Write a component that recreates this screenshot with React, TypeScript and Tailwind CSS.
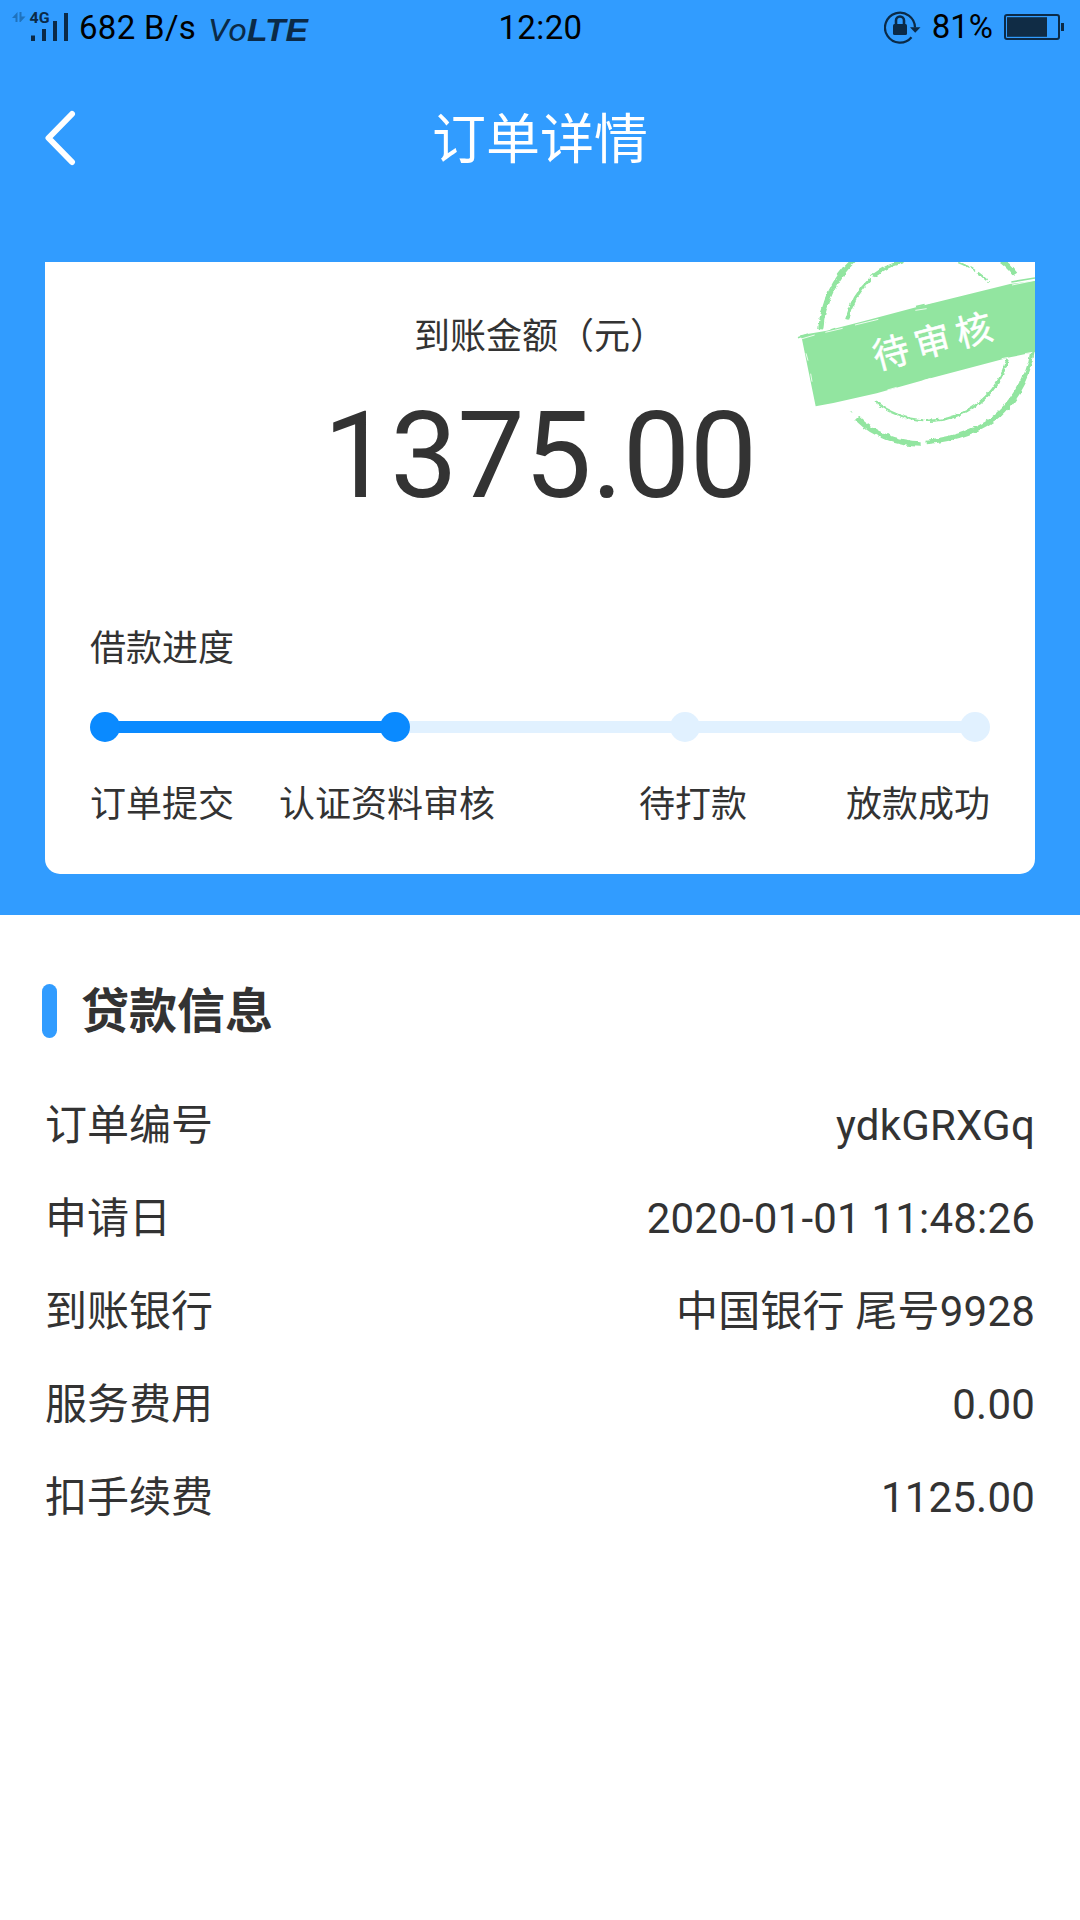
const steps = [
  { label: "订单提交", done: true },
  { label: "认证资料审核", done: true },
  { label: "待打款", done: false },
  { label: "放款成功", done: false },
];

const details = [
  { label: "订单编号", value: "ydkGRXGq" },
  { label: "申请日", value: "2020-01-01 11:48:26" },
  { label: "到账银行", value: "中国银行 尾号9928" },
  { label: "服务费用", value: "0.00" },
  { label: "扣手续费", value: "1125.00" },
];

function SignalIcon() {
  return (
    <svg className="w-[60px] h-[32px]" viewBox="0 0 60 32" fill="#0b2a47">
      <path d="M0 8 L5.5 2 V12 H3.5 V8 Z M7.5 2 H9.5 V6.5 H13.5 L8.5 12 H7.5 Z" fill="#1f72bd" />
      <text
        x="17.5"
        y="13.3"
        fontSize="15.5"
        fontWeight="700"
        fontFamily="Roboto"
        textLength="20"
        lengthAdjust="spacingAndGlyphs"
      >
        4G
      </text>
      <rect x="19" y="25.5" width="4" height="5.5" />
      <rect x="30" y="19" width="4" height="12" />
      <rect x="41" y="11" width="4" height="20" />
      <rect x="52" y="3" width="4" height="28" />
    </svg>
  );
}

function RotationLockIcon() {
  return (
    <svg className="w-[38px] h-[34px]" viewBox="0 0 38 34" fill="none">
      <path d="M27.5 27.3 A15 15 0 1 1 31 17.5" stroke="#0b2a47" strokeWidth="2.2" />
      <path d="M26 17.3 H36.5 L31.2 22.8 Z" fill="#0b2a47" />
      <rect x="9" y="14" width="14" height="11" rx="1.5" fill="#0b2a47" />
      <path d="M12 14.5 V10.5 a4 4 0 0 1 8 0 V14.5" stroke="#0b2a47" strokeWidth="2.6" />
    </svg>
  );
}

function BatteryIcon() {
  return (
    <svg className="w-[60px] h-[26px]" viewBox="0 0 60 26" fill="none">
      <rect x="1" y="1" width="54" height="24" rx="2" stroke="#0b2a47" strokeWidth="2" />
      <rect x="3" y="3.2" width="40" height="19.6" fill="#102c45" />
      <rect x="57" y="9" width="3" height="8" fill="#0b2a47" />
    </svg>
  );
}

function StatusBar() {
  return (
    <div className="grid grid-cols-3 items-start h-[72px] pl-[12px] pr-[16px] text-[33px] leading-[56px] text-black">
      <div className="flex items-start">
        <div className="pt-[10px]">
          <SignalIcon />
        </div>
        <span className="ml-[7px] whitespace-nowrap tracking-[0.3px]">682 B/s</span>
        <svg
          className="ml-[12px] w-[110px] h-[56px] shrink-0 overflow-visible"
          viewBox="0 0 110 56"
          fill="#0b2a47"
        >
          <text
            x="0"
            y="41"
            fontSize="32"
            fontStyle="italic"
            fontFamily="Roboto"
            textLength="39"
            lengthAdjust="spacingAndGlyphs"
          >
            Vo
          </text>
          <text
            x="39"
            y="41"
            fontSize="32"
            fontStyle="italic"
            fontWeight="800"
            fontFamily="'Liberation Sans'"
            textLength="61"
            lengthAdjust="spacingAndGlyphs"
          >
            LTE
          </text>
        </svg>
      </div>
      <span className="pl-[5px] text-center tracking-[0.4px]">12:20</span>
      <div className="flex justify-end">
        <div className="pt-[10px]">
          <RotationLockIcon />
        </div>
        <span className="ml-[10px] leading-[54px]">81%</span>
        <div className="ml-[11px] pt-[14px]">
          <BatteryIcon />
        </div>
      </div>
    </div>
  );
}

function Stamp() {
  return (
    <svg
      className="absolute top-0 right-0 w-[255px] h-[198px]"
      viewBox="0 36 765 594"
      fill="none"
      stroke="#92e5a0"
    >
      <defs>
        <filter id="rough" x="-10%" y="-10%" width="120%" height="120%" colorInterpolationFilters="sRGB">
          <feTurbulence type="fractalNoise" baseFrequency="0.06" numOctaves="2" seed="4" />
          <feDisplacementMap in="SourceGraphic" scale="13" xChannelSelector="R" yChannelSelector="G" />
        </filter>
      </defs>
      <g filter="url(#rough)">
        <path d="M122 238 A320 320 0 0 1 222 30" strokeWidth="15" />
        <path d="M655 24 Q686 44 706 72" strokeWidth="14" />
        <path d="M757 305 Q750 360 715 420" strokeWidth="13" />
        <path d="M729 395 Q700 455 655 495" strokeWidth="18" />
        <path d="M662 490 Q580 562 440 576" strokeWidth="14" />
        <path d="M422 582 Q370 582 315 560" strokeWidth="17" />
        <path d="M322 562 Q270 544 232 506" strokeWidth="16" />
        <path d="M212 485 l2 5" strokeWidth="7" />
        <path d="M200 208 A247 247 0 0 1 270 88" strokeWidth="9" />
        <path d="M276 80 A247 247 0 0 1 370 34" strokeWidth="10" />
        <path d="M535 37 Q590 58 625 96" strokeWidth="6" strokeDasharray="34 5 20 7" />
        <path d="M683 326 A247 247 0 0 1 435 512" strokeWidth="8" />
        <path d="M430 511 Q350 505 288 457" strokeWidth="6" />
      </g>
      <path
        d="M66 268 L60 256 L96 250 L140 242 L180 232 L250 214 L408 172 L690 102 L765 92 V306 L690 322 L440 388 L290 430 L160 459 L107 469 L86 366 Z"
        fill="#92e5a0"
        stroke="none"
      />
      <path
        d="M54 263 L84 252 M152 240 l14 -4 M408 170 l26 -6 M444 167 l20 -5 M694 96 L765 84"
        strokeWidth="5"
      />
      <g stroke="#ffffff" strokeWidth="2.5">
        <path d="M60 268 L104 255 M136 247 l52 -12 M225 225 l70 -17 M406 181 l34 -5 M696 105 L765 91" />
        <path d="M78 310 l6 22 M92 371 l4 24" />
        <path d="M322 420 l28 -8 M428 392 l24 -7 M665 326 l20 -4 M735 311 l22 -4" />
      </g>
      <text
        transform="translate(290 360) rotate(-15)"
        fill="#ffffff"
        stroke="#ffffff"
        strokeWidth="1.5"
        fontSize="109"
        letterSpacing="20"
        fontFamily="'Noto Sans CJK SC', sans-serif"
      >
        待审核
      </text>
    </svg>
  );
}

function ProgressTrack() {
  return (
    <div className="flex items-center h-[30px]">
      {steps.map((step, i) => (
        <div key={step.label} className={i === 0 ? "flex items-center" : "flex flex-1 items-center"}>
          {i > 0 && (
            <div className={`flex-1 h-[12px] -mx-[2px] ${step.done ? "bg-[#0a8aff]" : "bg-[#e1f1ff]"}`} />
          )}
          <div
            className={`relative z-10 w-[30px] h-[30px] rounded-full ${step.done ? "bg-[#0a8aff]" : "bg-[#e1f1ff]"}`}
          />
        </div>
      ))}
    </div>
  );
}

export default function App() {
  return (
    <div className="w-[1080px] h-[1920px] bg-white text-[#333333] font-[Roboto,'Noto_Sans_CJK_SC',sans-serif] overflow-hidden">
      <header className="h-[915px] bg-[#319cff]">
        <StatusBar />
        <div className="grid grid-cols-[200px_1fr_200px] items-center h-[132px] text-white">
          <svg className="ml-[44px] w-[32px] h-[56px]" viewBox="0 0 32 56" fill="none">
            <path
              d="M28 4 L4.5 28 L28 52"
              stroke="currentColor"
              strokeWidth="6"
              strokeLinecap="round"
              strokeLinejoin="round"
            />
          </svg>
          <h1 className="pt-[6px] text-center text-[54px] leading-[126px]">订单详情</h1>
        </div>

        <section className="relative mt-[58px] mx-[45px] h-[612px] px-[45px] bg-white rounded-b-[15px] overflow-hidden">
          <Stamp />
          <p className="pt-[48px] text-center text-[36px] leading-[54px]">到账金额（元）</p>
          <p className="mt-[20px] text-center text-[120px] leading-[144px] tracking-[-0.4px]">1375.00</p>
          <h2 className="mt-[94px] text-[36px] leading-[54px]">借款进度</h2>
          <div className="mt-[36px]">
            <ProgressTrack />
          </div>
          <div className="grid grid-cols-[189px_360px_1fr_auto] mt-[36px] text-[36px] leading-[54px]">
            {steps.map((step) => (
              <span key={step.label}>{step.label}</span>
            ))}
          </div>
        </section>
      </header>

      <main className="pt-[60px] px-[45px]">
        <div className="flex items-center h-[72px] -ml-[3px]">
          <div className="w-[15px] h-[54px] rounded-full bg-[#319cff]" />
          <h2 className="ml-[24px] pt-[2px] text-[48px] leading-[70px] font-bold">贷款信息</h2>
        </div>
        <dl className="mt-[32px]">
          {details.map((row) => (
            <div key={row.label} className="flex justify-between h-[93px] text-[42px] leading-[93px]">
              <dt>{row.label}</dt>
              <dd className="tracking-[0.2px]">{row.value}</dd>
            </div>
          ))}
        </dl>
      </main>
    </div>
  );
}
